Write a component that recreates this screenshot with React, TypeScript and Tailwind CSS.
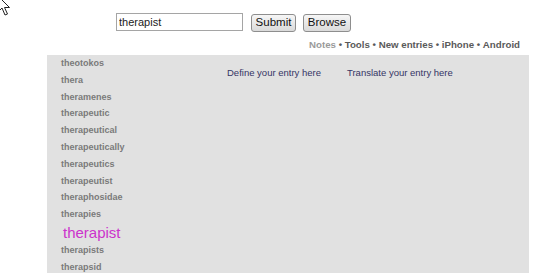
const entries = [
  "theotokos",
  "thera",
  "theramenes",
  "therapeutic",
  "therapeutical",
  "therapeutically",
  "therapeutics",
  "therapeutist",
  "theraphosidae",
  "therapies",
  "therapist",
  "therapists",
  "therapsid",
];

const current = "therapist";

const Cursor = () => (
  <svg
    className="absolute left-[-3px] top-[-5px]"
    width="14"
    height="22"
    viewBox="0 0 14 22"
  >
    <path
      d="M1 1 L1 17 L5 13 L8 20 L10.5 19 L7.5 12.5 L12.5 12.5 Z"
      fill="#fff"
      stroke="#222"
      strokeWidth="1"
      strokeLinejoin="miter"
    />
  </svg>
);

export default function App() {
  return (
    <div className="relative h-screen overflow-hidden bg-white font-['Liberation_Sans',Arial,sans-serif]">
      <Cursor />

      {/* search form */}
      <div className="flex items-start pl-[116px] pt-[13px]">
        <input
          readOnly
          value="therapist"
          className="h-[18px] w-[127px] border border-[#a5a5a5] bg-white px-[2px] text-[11px] text-[#222] outline-none"
        />
        <button className="ml-[8px] mt-[1px] h-[18px] w-[45px] rounded-[3px] border border-[#8e8e8e] bg-gradient-to-b from-[#f6f6f6] to-[#dadada] text-[11.5px] leading-none text-[#111]">
          Submit
        </button>
        <button className="ml-[7px] mt-[1px] h-[18px] w-[48px] rounded-[3px] border border-[#8e8e8e] bg-gradient-to-b from-[#f6f6f6] to-[#dadada] text-[11.5px] leading-none text-[#111]">
          Browse
        </button>
      </div>

      {/* top links */}
      <div className="mt-[7px] flex w-[520px] justify-end text-[9.7px] font-bold leading-[12px] text-[#5a5a5a]">
        <span className="text-[#9a9a9a]">Notes</span>
        <span>&nbsp;•&nbsp;Tools&nbsp;•&nbsp;New entries&nbsp;•&nbsp;iPhone&nbsp;•&nbsp;Android</span>
      </div>

      {/* main panel */}
      <div className="ml-[47px] mt-[4px] flex h-[300px] w-[482px] bg-[#e1e1e1]">
        <div className="w-[180px] pl-[14px]">
          {entries.map((word) =>
            word === current ? (
              <div
                key={word}
                className="pl-[2px] text-[15px] leading-[19px] text-[#cc33cc]"
              >
                {word}
              </div>
            ) : (
              <div
                key={word}
                className="text-[9px] font-bold leading-[16.8px] text-[#7a7a7a]"
              >
                {word}
              </div>
            )
          )}
        </div>
        <div className="flex gap-[26px] pt-[12px] text-[9.5px] leading-[12px] text-[#353565]">
          <span>Define your entry here</span>
          <span>Translate your entry here</span>
        </div>
      </div>
    </div>
  );
}
